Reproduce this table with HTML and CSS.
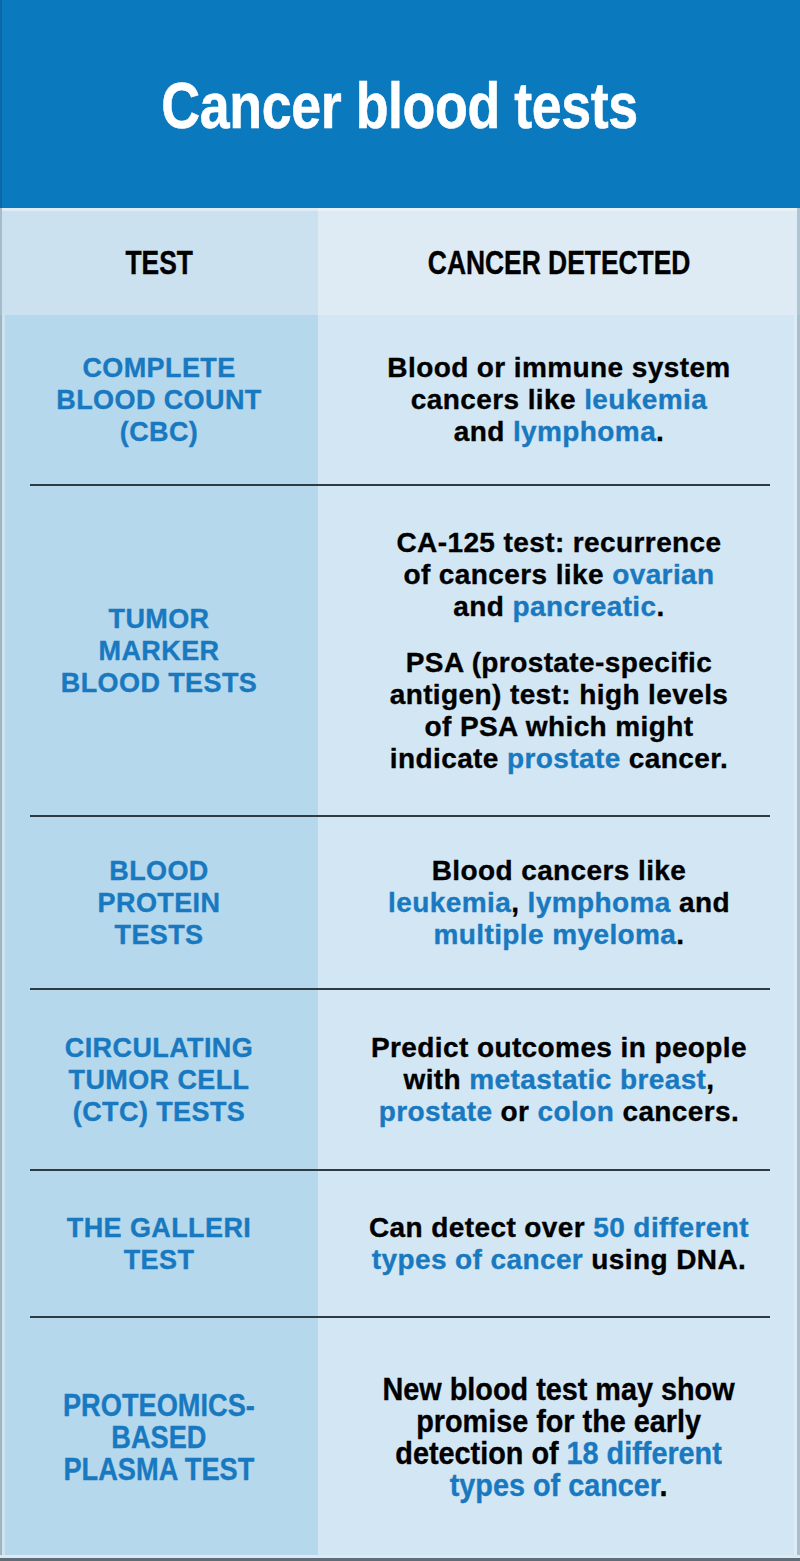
FILE: index.html
```html
<!DOCTYPE html>
<html lang="en">
<head>
<meta charset="utf-8">
<title>Cancer blood tests</title>
<link rel="stylesheet" href="styles.css">
</head>
<body>
<div class="sheet">
  <header class="banner">
    <h1 class="title">Cancer blood tests</h1>
  </header>
  <div class="table">
    <div class="row head">
      <div class="cell left"><span class="cond">TEST</span></div>
      <div class="cell right"><span class="cond">CANCER DETECTED</span></div>
    </div>
    <div class="row r1">
      <div class="cell left name">COMPLETE<br>BLOOD COUNT<br>(CBC)</div>
      <div class="cell right desc"><p>Blood or immune system<br>cancers like <span class="hl">leukemia</span><br>and <span class="hl">lymphoma</span>.</p></div>
    </div>
    <div class="rule"></div>
    <div class="row r2">
      <div class="cell left name">TUMOR<br>MARKER<br>BLOOD TESTS</div>
      <div class="cell right desc">
        <p>CA-125 test: recurrence<br>of cancers like <span class="hl">ovarian</span><br>and <span class="hl">pancreatic</span>.</p>
        <p>PSA (prostate-specific<br>antigen) test: high levels<br>of PSA which might<br>indicate <span class="hl">prostate</span> cancer.</p>
      </div>
    </div>
    <div class="rule"></div>
    <div class="row r3">
      <div class="cell left name">BLOOD<br>PROTEIN<br>TESTS</div>
      <div class="cell right desc"><p>Blood cancers like<br><span class="hl">leukemia</span>, <span class="hl">lymphoma</span> and<br><span class="hl">multiple myeloma</span>.</p></div>
    </div>
    <div class="rule"></div>
    <div class="row r4">
      <div class="cell left name">CIRCULATING<br>TUMOR CELL<br>(CTC) TESTS</div>
      <div class="cell right desc"><p>Predict outcomes in people<br>with <span class="hl">metastatic breast</span>,<br><span class="hl">prostate</span> or <span class="hl">colon</span> cancers.</p></div>
    </div>
    <div class="rule"></div>
    <div class="row r5">
      <div class="cell left name">THE GALLERI<br>TEST</div>
      <div class="cell right desc"><p>Can detect over <span class="hl">50 different</span><br><span class="hl">types of cancer</span> using DNA.</p></div>
    </div>
    <div class="rule"></div>
    <div class="row r6 narrow">
      <div class="cell left name"><span class="cond">PROTEOMICS-<br>BASED<br>PLASMA TEST</span></div>
      <div class="cell right desc"><p class="cond">New blood test may show<br>promise for the early<br>detection of <span class="hl">18 different</span><br><span class="hl">types of cancer</span>.</p></div>
    </div>
    <div class="foot"></div>
  </div>
</div>
</body>
</html>
```

FILE: styles.css
```css
* { box-sizing: border-box; }
html, body { margin: 0; padding: 0; }
body {
  width: 800px;
  background: #ffffff;
  font-family: "Liberation Sans", Arial, sans-serif;
}
.sheet { width: 800px; }

.banner {
  height: 208px;
  background: #0b79be;
  display: flex;
  align-items: center;
  justify-content: center;
  box-shadow: inset 2px 0 0 #0a68a4;
}
.title {
  display: inline-block;
  margin: 0;
  color: #ffffff;
  font-family: "Liberation Sans", Arial, sans-serif;
  font-weight: 700;
  font-size: 64px;
  line-height: 1;
  letter-spacing: -0.5px;
  transform: scaleX(0.84);
  padding-top: 4px;
  -webkit-text-stroke: 0.6px #ffffff;
}

.cond {
  display: inline-block;
  transform: scaleX(0.82);
}

.table {
  background: linear-gradient(to right, #b5d8ec 0, #b5d8ec 318px, #d3e6f3 318px, #d3e6f3 100%);
  box-shadow: inset 2px 0 0 #9db4c4, inset 5px 0 0 #cfe3ef, inset -3px 0 0 #a9bfcd, inset -6px 0 0 #dcebf4;
}

.row {
  display: grid;
  grid-template-columns: 318px 482px;
}
.cell {
  display: flex;
  flex-direction: column;
  align-items: center;
  justify-content: center;
  text-align: center;
}

.head { height: 107px; }
.head .cell {
  font-weight: 700;
  font-size: 33px;
  color: #000000;
  padding-top: 2px;
  -webkit-text-stroke: 0.4px #000000;
}
.head .cond { transform: scaleX(0.8); }
.head .left { background: #cce1ef; box-shadow: inset 2px 0 0 #a4bccb, inset 0 3px 0 #dfecf5; }
.head .right { background: #deebf5; box-shadow: inset -3px 0 0 #b0c5d2, inset 0 3px 0 #e8f1f8; }

.name {
  color: #1979c0;
  font-weight: 700;
  font-size: 27px;
  line-height: 32px;
  letter-spacing: 0.4px;
  -webkit-text-stroke: 0.35px #1979c0;
}
.desc {
  color: #000000;
  font-weight: 700;
  font-size: 28px;
  line-height: 32px;
  letter-spacing: 0.4px;
  -webkit-text-stroke: 0.35px #000000;
}
.desc .hl { -webkit-text-stroke: 0.35px #1979c0; }
.desc p { margin: 0; }
.desc p + p { margin-top: 24px; }
.hl { color: #1979c0; }

.narrow .name,
.narrow .desc {
  font-size: 32px;
  letter-spacing: 0;
}
.narrow .name .cond { transform: scaleX(0.85); }
.narrow .desc .cond { transform: scaleX(0.9); }

.rule {
  height: 2px;
  margin: 0 30px;
  background: #2f3a42;
}

.r1 { height: 169px; }
.r2 { height: 329px; }
.r3 { height: 171px; }
.r4 { height: 179px; }
.r5 { height: 145px; }
.r6 { height: 237px; }

.foot {
  height: 6px;
  background: #dbe9f2;
  border-bottom: 3px solid #5e6d77;
}
```
